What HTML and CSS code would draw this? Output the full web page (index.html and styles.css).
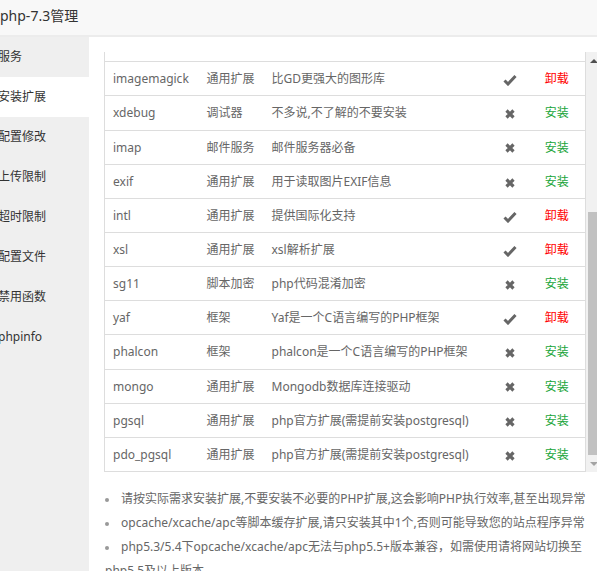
FILE: index.html
```html
<!DOCTYPE html>
<html lang="zh-CN">
<head>
    <meta charset="UTF-8">
    <meta name="viewport" content="width=device-width, initial-scale=1.0">
    <title>php-7.3管理</title>
    <link rel="stylesheet" href="styles.css">
</head>
<body>
    <div class="layer">
        <div class="layer-title">php-7.3管理</div>

        <div class="layer-body">
            <ul class="side-menu">
                <li>服务</li>
                <li class="on">安装扩展</li>
                <li>配置修改</li>
                <li>上传限制</li>
                <li>超时限制</li>
                <li>配置文件</li>
                <li>禁用函数</li>
                <li>phpinfo</li>
            </ul>

            <div class="main">
                <div class="ext-box">
                    <div class="ext-scroll">
                        <table class="ext-table">
                            <colgroup>
                                <col style="width:94px">
                                <col style="width:65px">
                                <col>
                                <col style="width:37px">
                                <col style="width:57px">
                            </colgroup>
                            <tbody>
                                <tr class="past"><td></td><td></td><td></td><td></td><td></td></tr>
                                <tr><td>imagemagick</td><td>通用扩展</td><td>比GD更强大的图形库</td><td class="st"><svg class="ic" viewBox="0 0 14 12"><path d="M1.5 6.5 L5 10 L12.5 2"/></svg></td><td class="act red">卸载</td></tr>
                                <tr><td>xdebug</td><td>调试器</td><td>不多说,不了解的不要安装</td><td class="st"><svg class="ic x" viewBox="0 0 12 12"><path d="M2.5 2.5 L9.5 9.5 M9.5 2.5 L2.5 9.5"/></svg></td><td class="act">安装</td></tr>
                                <tr><td>imap</td><td>邮件服务</td><td>邮件服务器必备</td><td class="st"><svg class="ic x" viewBox="0 0 12 12"><path d="M2.5 2.5 L9.5 9.5 M9.5 2.5 L2.5 9.5"/></svg></td><td class="act">安装</td></tr>
                                <tr><td>exif</td><td>通用扩展</td><td>用于读取图片EXIF信息</td><td class="st"><svg class="ic x" viewBox="0 0 12 12"><path d="M2.5 2.5 L9.5 9.5 M9.5 2.5 L2.5 9.5"/></svg></td><td class="act">安装</td></tr>
                                <tr><td>intl</td><td>通用扩展</td><td>提供国际化支持</td><td class="st"><svg class="ic" viewBox="0 0 14 12"><path d="M1.5 6.5 L5 10 L12.5 2"/></svg></td><td class="act red">卸载</td></tr>
                                <tr><td>xsl</td><td>通用扩展</td><td>xsl解析扩展</td><td class="st"><svg class="ic" viewBox="0 0 14 12"><path d="M1.5 6.5 L5 10 L12.5 2"/></svg></td><td class="act red">卸载</td></tr>
                                <tr><td>sg11</td><td>脚本加密</td><td>php代码混淆加密</td><td class="st"><svg class="ic x" viewBox="0 0 12 12"><path d="M2.5 2.5 L9.5 9.5 M9.5 2.5 L2.5 9.5"/></svg></td><td class="act">安装</td></tr>
                                <tr><td>yaf</td><td>框架</td><td>Yaf是一个C语言编写的PHP框架</td><td class="st"><svg class="ic" viewBox="0 0 14 12"><path d="M1.5 6.5 L5 10 L12.5 2"/></svg></td><td class="act red">卸载</td></tr>
                                <tr><td>phalcon</td><td>框架</td><td>phalcon是一个C语言编写的PHP框架</td><td class="st"><svg class="ic x" viewBox="0 0 12 12"><path d="M2.5 2.5 L9.5 9.5 M9.5 2.5 L2.5 9.5"/></svg></td><td class="act">安装</td></tr>
                                <tr><td>mongo</td><td>通用扩展</td><td>Mongodb数据库连接驱动</td><td class="st"><svg class="ic x" viewBox="0 0 12 12"><path d="M2.5 2.5 L9.5 9.5 M9.5 2.5 L2.5 9.5"/></svg></td><td class="act">安装</td></tr>
                                <tr><td>pgsql</td><td>通用扩展</td><td>php官方扩展(需提前安装postgresql)</td><td class="st"><svg class="ic x" viewBox="0 0 12 12"><path d="M2.5 2.5 L9.5 9.5 M9.5 2.5 L2.5 9.5"/></svg></td><td class="act">安装</td></tr>
                                <tr><td>pdo_pgsql</td><td>通用扩展</td><td>php官方扩展(需提前安装postgresql)</td><td class="st"><svg class="ic x" viewBox="0 0 12 12"><path d="M2.5 2.5 L9.5 9.5 M9.5 2.5 L2.5 9.5"/></svg></td><td class="act">安装</td></tr>
                            </tbody>
                        </table>
                    </div>
                    <!-- list is scrolled to the end, so the bar is drawn in that state -->
                    <div class="fake-bar">
                        <div class="bar-btn"><span class="arrow-up"></span></div>
                        <div class="bar-space"></div>
                        <div class="bar-thumb"></div>
                        <div class="bar-btn"><span class="arrow-down"></span></div>
                    </div>
                </div>

                <ul class="help">
                    <li>请按实际需求安装扩展,不要安装不必要的PHP扩展,这会影响PHP执行效率,甚至出现异常</li>
                    <li>opcache/xcache/apc等脚本缓存扩展,请只安装其中1个,否则可能导致您的站点程序异常</li>
                    <li>php5.3/5.4下opcache/xcache/apc无法与php5.5+版本兼容，如需使用请将网站切换至php5.5及以上版本</li>
                </ul>
            </div>
        </div>
    </div>
</body>
</html>
```

FILE: styles.css
```css
html, body {
    margin: 0;
    padding: 0;
    overflow: hidden;
}

body {
    font-family: "Noto Sans", "Noto Sans CJK SC", sans-serif;
    font-size: 12px;
    color: #333;
    background: #fff;
}

.layer {
    width: 601px;
}

.layer-title {
    height: 35px;
    line-height: 32px;
    font-size: 14px;
    color: #333;
    background: #f8f8f8;
    border-bottom: 2px solid #ececec;
}

.layer-body {
    display: flex;
    height: 534px;
}

.side-menu {
    list-style: none;
    margin: 0;
    padding: 0;
    width: 89px;
    background: #efefef;
}

.side-menu li {
    height: 40px;
    line-height: 40px;
    text-indent: -2px;
    font-size: 12px;
    color: #333;
    white-space: nowrap;
}

.side-menu li.on {
    background: #fff;
}

.main {
    flex: 1;
    padding: 15px 0 0 15px;
}

.ext-box {
    display: flex;
    height: 420px;
}

.ext-scroll {
    flex: 1;
    overflow: hidden;
    display: flex;
    flex-direction: column;
    justify-content: flex-end;
}

.ext-table {
    width: 100%;
    table-layout: fixed;
    border-collapse: collapse;
    border: 1px solid #ddd;
    color: #666;
}

.ext-table td {
    padding: 8px 0 8px 8px;
    height: 17.14px;
    line-height: 17.14px;
    text-align: left;
    border-top: 1px solid #ddd;
    white-space: nowrap;
}

.ext-table td.st {
    padding-left: 0;
    text-align: center;
}

.ext-table td.act {
    padding-left: 0;
    text-align: center;
    color: #20a53a;
}

.ext-table td.red {
    color: #f00;
}

.ic {
    width: 14px;
    height: 12px;
    vertical-align: middle;
    fill: none;
    stroke: #666;
    stroke-width: 3;
}

.ic.x {
    width: 12px;
    stroke-width: 3.2;
}

.fake-bar {
    width: 15px;
    display: flex;
    flex-direction: column;
    background: #f1f1f1;
}

.bar-btn {
    height: 17px;
    display: flex;
    align-items: center;
    justify-content: center;
}

.arrow-up {
    border-left: 4px solid transparent;
    border-right: 4px solid transparent;
    border-bottom: 4px solid #505050;
}

.arrow-down {
    border-left: 4px solid transparent;
    border-right: 4px solid transparent;
    border-top: 4px solid #a3a3a3;
}

.bar-space {
    flex: 1;
}

.bar-thumb {
    height: 243px;
    margin: 0 2px;
    background: #c1c1c1;
}

.help {
    list-style: none;
    margin: 15px 0 0;
    padding: 0 14px 0 1px;
    color: #666;
    line-height: 24px;
}

.help li::before {
    content: "";
    display: inline-block;
    width: 4px;
    height: 4px;
    margin-right: 12px;
    border-radius: 50%;
    background: #999;
    vertical-align: middle;
}
```
